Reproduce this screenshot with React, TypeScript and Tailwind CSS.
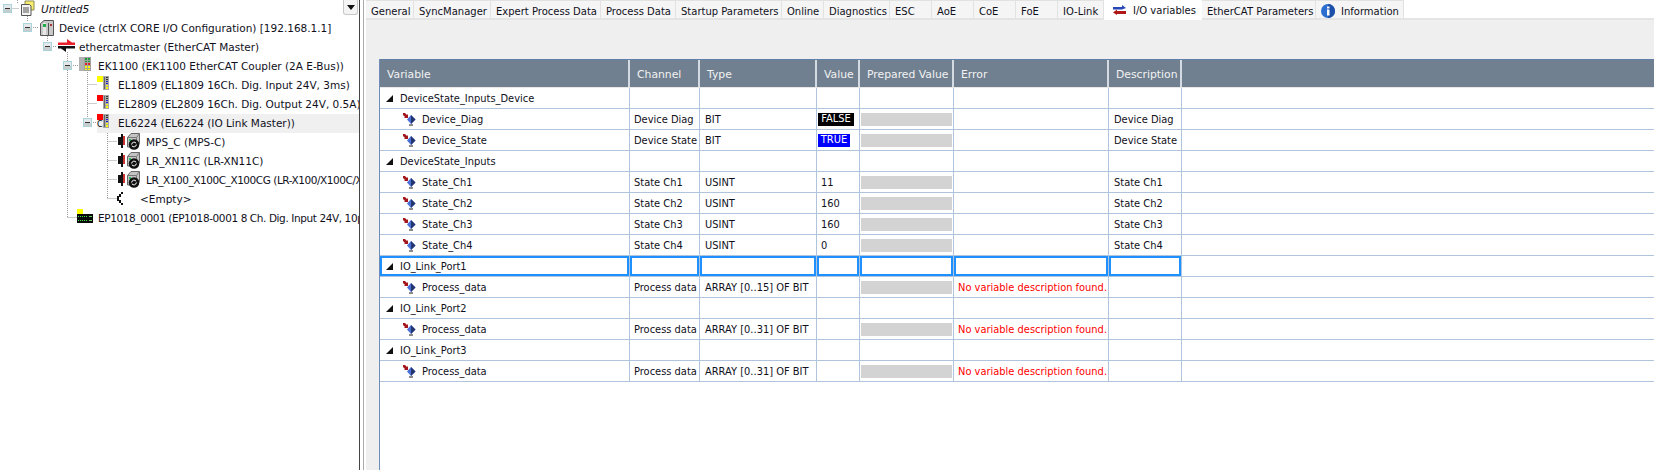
import React from "react";

const Exp = () => (
  <svg width="9" height="9" viewBox="0 0 9 9" className="shrink-0">
    <rect x="0.5" y="0.5" width="8" height="8" fill="#e4e8ea" stroke="#a8d4da" />
    <rect x="1" y="5" width="7" height="3" fill="#c9cccd" />
    <rect x="2" y="4" width="5" height="1" fill="#333" />
  </svg>
);

const ProjectIcon = () => (
  <svg width="15" height="16" viewBox="0 0 15 16" className="shrink-0">
    <path d="M5 1h9v9H5z" fill="#f6ee6a" stroke="#8b8b5a" />
    <path d="M1.5 4.5h8l1.5 1.5v9.5H1.5z" fill="#f4f4f4" stroke="#555" />
    <path d="M3 8h6M3 10h6M3 12h6" stroke="#555" />
  </svg>
);

const DeviceIcon = () => (
  <svg width="14" height="16" viewBox="0 0 14 16" className="shrink-0">
    <path d="M0.5 3.5 4 0.5h9.5v15H0.5z" fill="#c9c9c9" stroke="#555" />
    <rect x="3" y="3" width="3" height="12" fill="#e8e8e8" />
    <rect x="8" y="3" width="1" height="12" fill="#555" />
    <rect x="3" y="4" width="3" height="3" fill="#1fb04a" />
    <rect x="10" y="4" width="2" height="2" fill="#a33" />
  </svg>
);

const MasterIcon = () => (
  <svg width="17" height="13" viewBox="0 0 17 13" className="shrink-0">
    <path d="M9 0l5 3.5h3V6H0V3.5h9z" fill="#e8202a" />
    <path d="M17 7v2.5H8V13L3 9.5H0V7z" fill="#111" />
  </svg>
);

const Terminal = () => (
  <svg width="6" height="14" viewBox="0 0 6 14" className="shrink-0">
    <rect width="6" height="14" fill="#a8a8a8" />
    <rect x="1" y="1" width="1" height="12" fill="#666" />
    <path d="M3 1h2v1H3zM3 3h2v1H3z" fill="#333" />
    <path d="M3 5h2v1H3zM3 7h2v1H3z" fill="#22c" />
    <path d="M3 9h2v1H3zM3 11h2v2H3z" fill="#ff0" />
  </svg>
);

const CouplerIcon = () => (
  <svg width="12" height="14" viewBox="0 0 12 14" className="shrink-0">
    <rect width="5" height="14" fill="#b0b0b0" />
    <rect x="5" width="7" height="14" fill="#a0a0a0" />
    <path d="M6 1h2v2H6zM9 1h2v2H9zM6 4h2v1H6zM9 4h2v1H9z" fill="#1a9a3a" />
    <path d="M6 6h2v2H6zM9 6h2v2H9z" fill="#d22" />
    <path d="M6 9h2v2H6zM9 9h2v2H9zM6 12h2v1H6zM9 12h2v1H9z" fill="#ff0" />
  </svg>
);

const Slice = ({ color, c }: { color: string; c?: boolean }) => (
  <span className="relative flex w-[12px] shrink-0 items-start">
    <span className="h-[6px] w-[6px] shrink-0 self-start" style={{ backgroundColor: color }} />
    <Terminal />
    {c && (
      <span className="absolute bottom-[-1px] left-0 text-[8px] leading-[8px] text-black">C</span>
    )}
  </span>
);

const ModuleIcon = () => (
  <svg width="24" height="17" viewBox="0 0 24 17" className="shrink-0">
    <path d="M1 4h3V1h2v14H4v-3H1z" fill="#111" />
    <rect x="6" y="3" width="2" height="9" fill="#c33" />
    <path d="M10.5 4.5 14 0.5h8.5v10l-3 3.5h-9z" fill="#c4c4c4" stroke="#666" />
    <path d="M10.5 4.5h9v9.5M19.5 4.5l3-4" fill="none" stroke="#777" />
    <rect x="12" y="6" width="2" height="2" fill="#22c55e" />
    <circle cx="17" cy="11.5" r="5.3" fill="#111" />
    <path d="M14.6 11.5a2.5 2.5 0 0 1 4.5-1.3M19.4 11.5a2.5 2.5 0 0 1-4.5 1.3" fill="none" stroke="#fff" />
  </svg>
);

const EmptyIcon = () => (
  <svg width="8" height="13" viewBox="0 0 8 13" className="shrink-0">
    <path d="M0 4h2V2h2V0h2v2H4v3H2v3h2v3h2v2H4v-2H2V9H0z" fill="#111" />
  </svg>
);

const BoxIcon = () => (
  <svg width="16" height="14" viewBox="0 0 16 14" className="shrink-0">
    <rect width="6" height="6" fill="#ffff00" />
    <rect y="5" width="16" height="9" fill="#0a0a0a" />
    <path d="M1 7h1v1H1zM3 7h1v1H3zM5 7h1v1H5zM7 7h1v1H7zM9 7h1v1H9zM1 11h1v1H1zM3 11h1v1H3zM5 11h1v1H5zM7 11h1v1H7zM9 11h1v1H9z" fill="#3bea3b" />
    <path d="M12 7h3v1h-3zM12 11h3v1h-3z" fill="#6ad06a" />
  </svg>
);

const VarIcon = () => (
  <svg width="13" height="13" viewBox="0 0 13 13" className="shrink-0">
    <path d="M0 0h2l2 2 1-1v4H1l1-1-2-2z" fill="#a3161c" />
    <path d="M8 2l4.5 4.5L8 11 4 6.5z" fill="#4a6fd8" />
    <path d="M8 2v9l4.5-4.5z" fill="#23366e" />
    <path d="M6 11h4v2H6z" fill="#8a8a8a" />
  </svg>
);

const Tri = () => (
  <svg width="7" height="7" viewBox="0 0 7 7" className="shrink-0">
    <path d="M7 0v7H0z" fill="#111" />
  </svg>
);

const TabIoIcon = () => (
  <svg width="13" height="10" viewBox="0 0 13 10" className="shrink-0">
    <path d="M0 2h9V0l4 3-4 1.5H0z" fill="#2747b8" />
    <path d="M13 6H4V4.5L0 7.5 4 10V9h9z" fill="#b01818" />
  </svg>
);

const TabInfoIcon = () => (
  <svg width="14" height="14" viewBox="0 0 14 14" className="shrink-0">
    <circle cx="7" cy="7" r="7" fill="#2a6fd0" />
    <path d="M7 0a7 7 0 0 1 0 14z" fill="#1c4fa8" />
    <rect x="6" y="2.5" width="2.5" height="2" fill="#fff" />
    <rect x="6" y="5.5" width="2.5" height="6" fill="#fff" />
  </svg>
);

const tree: { pl: string; exp?: boolean; gap: string; icon: React.ReactNode; text: string; mr: string; italic?: boolean; sel?: boolean; tx?: string }[] = [
  { pl: "pl-[3px]", exp: true, gap: "ml-[8px] mb-[3px]", icon: <ProjectIcon />, mr: "ml-[6px]", text: "Untitled5", italic: true },
  { pl: "pl-[23px]", exp: true, gap: "ml-[8px] mb-[2px]", icon: <DeviceIcon />, mr: "ml-[5px]", text: "Device (ctrlX CORE I/O Configuration) [192.168.1.1]" },
  { pl: "pl-[43px]", exp: true, gap: "ml-[6px] mb-[4px]", icon: <MasterIcon />, mr: "ml-[4px]", text: "ethercatmaster (EtherCAT Master)" },
  { pl: "pl-[63px]", exp: true, gap: "ml-[7px] mb-[5px]", icon: <CouplerIcon />, mr: "ml-[7px]", text: "EK1100 (EK1100 EtherCAT Coupler (2A E-Bus))" },
  { pl: "pl-[97px]", gap: "mb-[5px]", icon: <Slice color="#ffff00" />, mr: "ml-[9px]", text: "EL1809 (EL1809 16Ch. Dig. Input 24V, 3ms)" },
  { pl: "pl-[97px]", gap: "mb-[5px]", icon: <Slice color="#ff0000" />, mr: "ml-[9px]", text: "EL2809 (EL2809 16Ch. Dig. Output 24V, 0.5A)" },
  { pl: "pl-[83px]", exp: true, gap: "ml-[5px] mb-[5px]", icon: <Slice color="#ff0000" c />, mr: "ml-[9px]", text: "EL6224 (EL6224 (IO Link Master))", sel: true },
  { pl: "pl-[117px]", gap: "mb-[3px]", icon: <ModuleIcon />, mr: "ml-[5px]", text: "MPS_C (MPS-C)" },
  { pl: "pl-[117px]", gap: "mb-[3px]", icon: <ModuleIcon />, mr: "ml-[5px]", text: "LR_XN11C (LR-XN11C)" },
  { pl: "pl-[117px]", gap: "mb-[3px]", icon: <ModuleIcon />, mr: "ml-[5px]", text: "LR_X100_X100C_X100CG (LR-X100/X100C/X100CG)", tx: "tracking-[-0.45px]" },
  { pl: "pl-[117px]", gap: "mb-[3px]", icon: <EmptyIcon />, mr: "ml-[15px]", text: "<Empty>" },
  { pl: "pl-[77px]", gap: "mb-[5px]", icon: <BoxIcon />, mr: "ml-[5px]", text: "EP1018_0001 (EP1018-0001 8 Ch. Dig. Input 24V, 10µs)", tx: "tracking-[-0.4px]" },
];

const tabs: { t: string; w: string; icon?: React.ReactNode; active?: boolean }[] = [
  { t: "General", w: "w-[48px]" },
  { t: "SyncManager", w: "w-[77px]" },
  { t: "Expert Process Data", w: "w-[110px]" },
  { t: "Process Data", w: "w-[75px]" },
  { t: "Startup Parameters", w: "w-[106px]" },
  { t: "Online", w: "w-[42px]" },
  { t: "Diagnostics", w: "w-[66px]" },
  { t: "ESC", w: "w-[42px]" },
  { t: "AoE", w: "w-[42px]" },
  { t: "CoE", w: "w-[42px]" },
  { t: "FoE", w: "w-[42px]" },
  { t: "IO-Link", w: "w-[46px]" },
  { t: "I/O variables", w: "w-[98px]", icon: <TabIoIcon />, active: true },
  { t: "EtherCAT Parameters", w: "w-[114px]" },
  { t: "Information", w: "w-[88px]", icon: <TabInfoIcon /> },
];

const cols = "grid grid-cols-[250px_70px_117px_43px_94px_155px_73px_1fr]";
const headers = ["Variable", "Channel", "Type", "Value", "Prepared Value", "Error", "Description", ""];

type Row = { group?: string; v?: string; ch?: string; ty?: string; val?: string; desc?: string; err?: boolean; sel?: boolean };
const rows: Row[] = [
  { group: "DeviceState_Inputs_Device" },
  { v: "Device_Diag", ch: "Device Diag", ty: "BIT", val: "FALSE", desc: "Device Diag" },
  { v: "Device_State", ch: "Device State", ty: "BIT", val: "TRUE", desc: "Device State" },
  { group: "DeviceState_Inputs" },
  { v: "State_Ch1", ch: "State Ch1", ty: "USINT", val: "11", desc: "State Ch1" },
  { v: "State_Ch2", ch: "State Ch2", ty: "USINT", val: "160", desc: "State Ch2" },
  { v: "State_Ch3", ch: "State Ch3", ty: "USINT", val: "160", desc: "State Ch3" },
  { v: "State_Ch4", ch: "State Ch4", ty: "USINT", val: "0", desc: "State Ch4" },
  { group: "IO_Link_Port1", sel: true },
  { v: "Process_data", ch: "Process data", ty: "ARRAY [0..15] OF BIT", err: true },
  { group: "IO_Link_Port2" },
  { v: "Process_data", ch: "Process data", ty: "ARRAY [0..31] OF BIT", err: true },
  { group: "IO_Link_Port3" },
  { v: "Process_data", ch: "Process data", ty: "ARRAY [0..31] OF BIT", err: true },
];

const cell = "flex h-[21px] items-center overflow-hidden whitespace-nowrap border-r border-b border-[#b0c4de]";

function TableRow({ r }: { r: Row }) {
  const ring = r.sel ? "shadow-[inset_0_0_0_2px_#1e90ff]" : "";
  return (
    <div className={cols}>
      <div className={`${cell} ${ring} ${r.group ? "pl-[6px]" : "pl-[23px]"}`}>
        {r.group ? <Tri /> : <VarIcon />}
        <span className={`pt-[3px] ${r.group ? "ml-[7px]" : "ml-[6px]"}`}>{r.group ?? r.v}</span>
      </div>
      <div className={`${cell} ${ring} pl-[4px] pt-[3px]`}>{r.ch}</div>
      <div className={`${cell} ${ring} pl-[5px] pt-[3px]`}>{r.ty}</div>
      <div className={`${cell} ${ring} pl-[1px] pt-[1px]`}>
        {r.val === "FALSE" && <span className="flex h-[13px] w-[36px] items-center justify-center bg-black text-white">FALSE</span>}
        {r.val === "TRUE" && <span className="flex h-[13px] w-[32px] items-center justify-center bg-[#0000ff] text-white">TRUE</span>}
        {r.val && r.val !== "FALSE" && r.val !== "TRUE" && <span className="pl-[3px] pt-[2px]">{r.val}</span>}
      </div>
      <div className={`${cell} ${ring} pl-[1px] pt-[1px]`}>
        {r.v && <span className="h-[13px] w-[91px] bg-[#d3d3d3]" />}
      </div>
      <div className={`${cell} ${ring} pl-[4px] pt-[3px] text-[#ff0000]`}>{r.err && "No variable description found."}</div>
      <div className={`${cell} ${ring} pl-[5px] pt-[3px]`}>{r.desc}</div>
      <div className="h-[21px] border-b border-[#b0c4de]" />
    </div>
  );
}

export default function App() {
  return (
    <div className="flex h-[470px] w-[1654px] overflow-hidden bg-white font-['DejaVu_Sans',sans-serif] text-[10.5px] text-[#10101c]">
      <div className="relative h-full w-[360px] shrink-0 overflow-hidden border-r border-[#444] bg-white">
        <svg width="360" height="230" className="absolute left-0 top-0" fill="none" stroke="#9a9a9a" strokeDasharray="1 1">
          <path d="M11.5 8.5H19M17.5 0V3M27.5 14V22M31 27.5H39M47.5 34V42M51 46.5H57M67.5 52V217M71 65.5H78M67.5 217.5H77M87.5 70V118M87.5 84.5H97M87.5 103.5H97M91 122.5H97M107.5 131V199M107.5 141.5H117M107.5 160.5H117M107.5 179.5H117M107.5 198.5H117" />
        </svg>
        <div className="relative flex flex-col">
          {tree.map((n, i) => (
            <div key={i} className={`relative flex h-[19px] items-center whitespace-nowrap ${n.pl}`}>
              {n.sel && <div className="absolute bottom-0 left-[97px] right-0 top-0 bg-[#f0f0f0]" />}
              {n.exp && <span className="relative mb-[3px] flex"><Exp /></span>}
              <span className={`relative flex ${n.gap}`}>{n.icon}</span>
              <span className={`relative ${n.mr} ${n.italic ? "italic" : ""} ${n.tx ?? ""}`}>{n.text}</span>
            </div>
          ))}
        </div>
        <div className="absolute left-[343px] top-0 flex h-[15px] w-[15px] items-center justify-center rounded-b-[3px] border border-t-0 border-[#c8c8c8] bg-[#f4f4f4]">
          <svg width="8" height="5" viewBox="0 0 8 5"><path d="M0 0h8L4 5z" fill="#111" /></svg>
        </div>
      </div>
      <div className="w-[4px] shrink-0 border-r border-[#aaa] bg-white" />
      <div className="flex h-full min-w-0 flex-1 flex-col bg-white pl-[2px]">
        <div className="flex h-[20px] shrink-0 border-b-2 border-[#e4e4e4] text-[10px]">
          {tabs.map((t) => (
            <div
              key={t.t}
              className={`flex items-center whitespace-nowrap ${t.w} ${
                t.active
                  ? "relative z-10 h-[20px] bg-white pl-[9px]"
                  : "h-[18px] border-r border-t border-[#e2e2e2] bg-[#f5f5f5] pl-[5px] pt-[3px]"
              }`}
            >
              {t.icon}
              <span className={t.active ? "ml-[7px]" : t.icon ? "ml-[6px]" : ""}>{t.t}</span>
            </div>
          ))}
        </div>
        <div className="flex min-h-0 flex-1 flex-col bg-[#efefef] pl-[13px] pt-[39px]">
          <div className="flex min-h-0 flex-1 flex-col border-l border-[#6f8db8] bg-white text-[9.9px]">
            <div className={`${cols} h-[29px] whitespace-nowrap border-y border-t-[#5f7fa8] border-b-[#e8e8e8] bg-[#708090] text-[10.8px] text-[#f2f2f2]`}>
              {headers.map((h, i) => (
                <div key={i} className={`flex items-center pl-[7px] pt-[4px] ${i < 7 ? "border-r-2 border-[#d5dbe2]" : ""}`}>{h}</div>
              ))}
            </div>
            {rows.map((r, i) => (
              <TableRow key={i} r={r} />
            ))}
          </div>
        </div>
      </div>
    </div>
  );
}
